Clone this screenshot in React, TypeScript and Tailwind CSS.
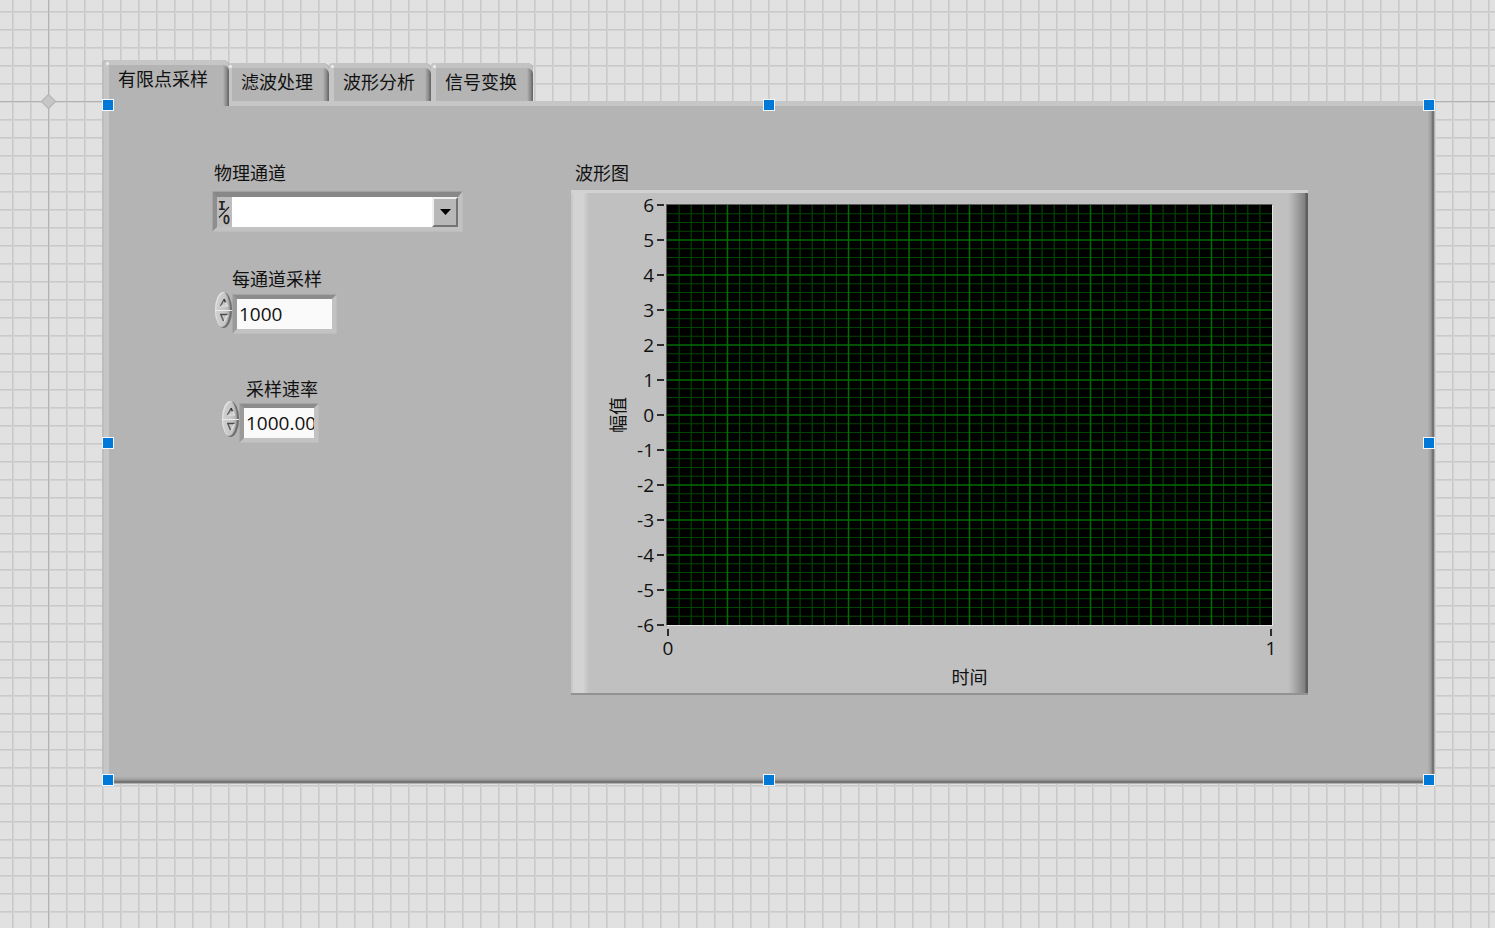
import React, { useState } from 'react';
import clsx from 'clsx';

const TABS = ['有限点采样', '滤波处理', '波形分析', '信号变换'];
const Y_TICKS = [6, 5, 4, 3, 2, 1, 0, -1, -2, -3, -4, -5, -6];
const X_TICKS = [0, 1];

const HANDLES = [
  'left-0 top-0',
  'left-1/2 top-0',
  'left-full top-0',
  'left-0 top-1/2',
  'left-full top-1/2',
  'left-0 top-full',
  'left-1/2 top-full',
  'left-full top-full',
];

function Tab({ label, active, onClick }: { label: string; active: boolean; onClick: () => void }) {
  return (
    <button
      role="tab"
      aria-selected={active}
      onClick={onClick}
      className={clsx(
        'relative flex items-start rounded-tl-sm rounded-tr-md bg-[linear-gradient(to_left,#6a6a6a_1px,#868686_2px,#9a9a9a_4px,#b4b4b4_6px)] whitespace-nowrap',
        active
          ? 'z-10 -mr-[2px] -mb-[5px] h-[46px] pt-[7px] pr-[21px] pl-4 shadow-[inset_2px_0_0_#bdbdbd,inset_7px_0_0_#c6c6c6,inset_0_5px_0_#c6c6c6]'
          : 'h-[38px] pt-[7px] pr-4 pl-[14px] shadow-[inset_5px_0_0_#c6c6c6,inset_0_5px_0_#c3c3c3]'
      )}
    >
      <span className={clsx('absolute top-[2px] size-[3px] rounded-full bg-[#eeeeee]', active ? 'left-1' : 'left-[2px]')} />
      {label}
    </button>
  );
}

function SpinArrow({ down }: { down?: boolean }) {
  return (
    <svg viewBox="0 0 10 9" className="h-[9px] w-[10px]" fill="none">
      {down ? (
        <>
          <path d="M1 1.5H8.5" stroke="#4c4c4c" strokeWidth="1.3" />
          <path d="M2 2L4.5 8" stroke="#5c5c5c" strokeWidth="1.5" />
          <path d="M8.5 2L5.5 8" stroke="#e4e4e4" strokeWidth="1.2" />
        </>
      ) : (
        <>
          <path d="M1.5 8L5 1.5" stroke="#5c5c5c" strokeWidth="1.5" />
          <path d="M5 1L6.5 4.5" stroke="#333333" strokeWidth="1.5" />
          <path d="M6.5 4.5L8.5 8H2" stroke="#e4e4e4" strokeWidth="1.2" />
        </>
      )}
    </svg>
  );
}

interface NumericProps {
  id: string;
  label: string;
  initial: string;
  labelClass: string;
  rowClass: string;
  inputClass: string;
}

function NumericControl({ id, label, initial, labelClass, rowClass, inputClass }: NumericProps) {
  const [value, setValue] = useState(initial);
  const decimals = initial.split('.')[1]?.length ?? 0;
  const step = (delta: number) => setValue((Number(value) + delta).toFixed(decimals));

  return (
    <div className="flex flex-col items-start">
      <label htmlFor={id} className={labelClass}>
        {label}
      </label>
      <div className={clsx('flex items-start', rowClass)}>
        <div className="flex h-9 w-[17px] flex-col overflow-hidden rounded-[50%] bg-[linear-gradient(to_right,#cfcfcf,#c6c6c6_60%,#9c9c9c)] shadow-[inset_-2px_-1px_1px_#6c6c6c,inset_1px_1px_1px_#e6e6e6]">
          <button
            aria-label={`${label} +`}
            onClick={() => step(1)}
            className="flex flex-1 items-center justify-center border-b border-[#ececec] pt-1"
          >
            <SpinArrow />
          </button>
          <button
            aria-label={`${label} -`}
            onClick={() => step(-1)}
            className="flex flex-1 items-center justify-center pb-1"
          >
            <SpinArrow down />
          </button>
        </div>
        <div className="mt-[2px] border border-t-[#a4a4a4] border-r-[#bcbcbc] border-b-[#bcbcbc] border-l-[#a8a8a8]">
          <div className="border-4 border-t-[#8c8c8c] border-r-[#c2c2c2] border-b-[#c2c2c2] border-l-[#9a9a9a]">
            <input
              id={id}
              value={value}
              onChange={(e) => setValue(e.target.value)}
              className={clsx('block h-[30px] bg-[#fafafa] pl-[2px] text-[19px] outline-none', inputClass)}
            />
          </div>
        </div>
      </div>
    </div>
  );
}

function ChannelControl() {
  return (
    <div className="flex flex-col">
      <label htmlFor="channel" className="pl-[2px]">
        物理通道
      </label>
      <div className="mt-[6px] border border-t-[#a2a2a2] border-r-[#bcbcbc] border-b-[#bcbcbc] border-l-[#a4a4a4]">
        <div className="flex border-4 border-t-[5px] border-t-[#888888] border-r-[#c2c2c2] border-b-[#c2c2c2] border-l-[#8e8e8e] bg-[#bdbdbd]">
          <svg viewBox="0 0 15 30" className="h-[30px] w-[15px] shrink-0">
            <text x="1" y="13" fontFamily="Liberation Mono" fontWeight="bold" fontSize="13" fill="#222">I</text>
            <text x="6" y="27" fontFamily="DejaVu Sans Condensed" fontSize="12" fill="#111" stroke="#111" strokeWidth="0.4">0</text>
            <path d="M2 20.5L12 10" stroke="#222" strokeWidth="1.2" />
          </svg>
          <div className="relative flex-1">
            <select id="channel" className="block h-[30px] w-full appearance-none bg-white px-1 pr-7 outline-none">
              <option></option>
            </select>
            <span className="pointer-events-none absolute top-0 right-0 flex h-[30px] w-[26px] items-center justify-center border-2 border-t-[#f0f0f0] border-r-[#747474] border-b-[#747474] border-l-[#f0f0f0] bg-[#b8b8b8]">
              <svg viewBox="0 0 11 6" className="h-[6px] w-[11px]">
                <path d="M0 0H11L5.5 6Z" fill="#000" />
              </svg>
            </span>
          </div>
        </div>
      </div>
    </div>
  );
}

function PlotGrid() {
  const cols = Array.from({ length: 49 }, (_, i) => i + 1);
  const rows = Array.from({ length: 47 }, (_, i) => i + 1);
  const minorCols = cols.filter((i) => i % 5 !== 0);
  const majorCols = cols.filter((i) => i % 5 === 0);
  const minorRows = rows.filter((i) => i % 4 !== 0);
  const majorRows = rows.filter((i) => i % 4 === 0);

  return (
    <svg className="block h-[420px] w-full bg-black">
      <g stroke="#004600" strokeWidth="1.2">
        {minorCols.map((i) => (
          <line key={`c${i}`} x1={`${i * 2}%`} x2={`${i * 2}%`} y1="0" y2="100%" />
        ))}
        {minorRows.map((i) => (
          <line key={`r${i}`} x1="0" x2="100%" y1={`${(i * 100) / 48}%`} y2={`${(i * 100) / 48}%`} />
        ))}
      </g>
      <g stroke="#006c00" strokeWidth="1.5">
        {majorCols.map((i) => (
          <line key={`c${i}`} x1={`${i * 2}%`} x2={`${i * 2}%`} y1="0" y2="100%" />
        ))}
        {majorRows.map((i) => (
          <line key={`r${i}`} x1="0" x2="100%" y1={`${(i * 100) / 48}%`} y2={`${(i * 100) / 48}%`} />
        ))}
      </g>
    </svg>
  );
}

function WaveformGraph() {
  return (
    <section className="flex min-w-0 flex-1 flex-col">
      <h2 className="pl-1">波形图</h2>
      <div className="mt-[5px] flex border-t-[3px] border-b-2 border-t-[#d2d2d2] border-b-[#929292] bg-[linear-gradient(to_right,#c8c8c8_1px,#d3d3d3_3px,#d3d3d3_12px,#c0c0c0_18px,transparent_18px),linear-gradient(to_left,#5e5e5e_2px,#808080_3px,#949494_8px,#b4b4b4_16px,#c0c0c0_20px)] pt-[11px] pr-[35px] pb-1 pl-[35px]">
        <div className="flex h-[422px] w-6 items-center justify-center">
          <span className="rotate-180 [text-orientation:sideways] [writing-mode:vertical-rl]">幅值</span>
        </div>
        <div className="flex h-[422px] w-9 flex-col justify-between py-px text-[19px]">
          {Y_TICKS.map((t) => (
            <div key={t} className="flex h-0 items-center justify-end gap-[3px] pr-[2px]">
              <span>{t}</span>
              <span className="h-[2px] w-[7px] bg-[#2c2c2c]" />
            </div>
          ))}
        </div>
        <div className="flex min-w-0 flex-1 flex-col">
          <div className="border border-t-[#5c5c5c] border-r-[#e6e6e6] border-b-[#e6e6e6] border-l-[#5c5c5c]">
            <PlotGrid />
          </div>
          <div className="mt-[3px] flex justify-between px-px text-[19px]">
            {X_TICKS.map((t) => (
              <div key={t} className="flex w-[2px] flex-col items-center">
                <span className="h-[7px] w-[2px] bg-[#2c2c2c]" />
                <span className="leading-6">{t}</span>
              </div>
            ))}
          </div>
          <p className="mt-[5px] text-center">时间</p>
        </div>
      </div>
    </section>
  );
}

export default function App() {
  const [tab, setTab] = useState(0);

  return (
    <main className="relative min-h-screen bg-[#e1e1e1] bg-[linear-gradient(to_right,#cacaca_1px,#d2d2d2_1px,#d2d2d2_2px,transparent_2px),linear-gradient(to_bottom,#cacaca_1px,#d2d2d2_1px,#d2d2d2_2px,transparent_2px)] bg-[size:18px_18px] bg-[position:12px_11px] pt-[60px] pr-[60px] pb-36 pl-[102px] font-['Open_Sans','Noto_Sans_CJK_SC',sans-serif] text-lg leading-6 text-[#111111]">
      {/* canvas origin */}
      <div className="absolute inset-y-0 left-12 w-px bg-[#b2b2b2]" />
      <div className="absolute inset-x-0 top-[101px] h-px bg-[#b2b2b2]" />
      <div className="absolute top-24 left-[43px] size-[11px] rotate-45 border border-[#b4b4b4] bg-[#c6c6c6]" />

      <div className="relative">
        <div role="tablist" className="flex items-end">
          {TABS.map((label, i) => (
            <Tab key={label} label={label} active={i === tab} onClick={() => setTab(i)} />
          ))}
        </div>

        <div className="relative">
          <div
            role="tabpanel"
            className="flex gap-[108px] bg-[#b4b4b4] pt-[60px] pr-[127px] pb-[89px] pl-[110px] shadow-[inset_-1px_-1px_0_#b0b0b0,inset_-3px_-3px_0_#747474,inset_-4px_-4px_0_#8e8e8e,inset_-5px_-5px_0_#9c9c9c,inset_-7px_-7px_0_#aaaaaa,inset_2px_0_0_#bdbdbd,inset_7px_5px_0_#c6c6c6]"
          >
            <div className="flex w-[251px] shrink-0 flex-col">
              <ChannelControl />
              <div className="mt-[35px]">
                <NumericControl
                  id="samples"
                  label="每通道采样"
                  initial="1000"
                  labelClass="ml-5"
                  rowClass="ml-[3px] mt-[1px]"
                  inputClass="w-[95px]"
                />
              </div>
              <div className="mt-[43px]">
                <NumericControl
                  id="rate"
                  label="采样速率"
                  initial="1000.00"
                  labelClass="ml-[34px]"
                  rowClass="ml-[10px]"
                  inputClass="w-[70px]"
                />
              </div>
            </div>
            <WaveformGraph />
          </div>

          {/* selection handles */}
          <div className="pointer-events-none absolute inset-x-[6px] top-1 bottom-1 z-20">
            {HANDLES.map((pos) => (
              <span
                key={pos}
                className={clsx('absolute size-3 -translate-x-1/2 -translate-y-1/2 border border-[#f4f8fc] bg-[#0078d7]', pos)}
              />
            ))}
          </div>
        </div>
      </div>
    </main>
  );
}
